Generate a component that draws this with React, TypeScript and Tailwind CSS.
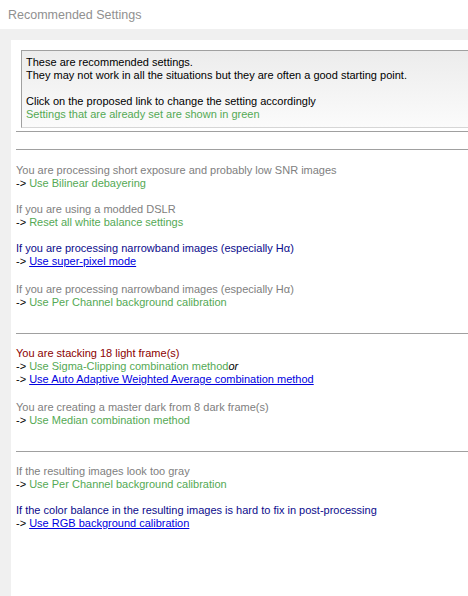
import React from "react";

type Part = { text: string; kind: "gray" | "green" | "navy" | "link" | "red" | "black" | "italic" };

const colorOf: Record<Part["kind"], string> = {
  gray: "text-[#808080]",
  green: "text-[#54a954]",
  navy: "text-[#0b0b8c]",
  link: "text-[#0000e0] underline",
  red: "text-[#8b0000]",
  black: "text-black",
  italic: "text-black italic",
};

function Line({ parts }: { parts: Part[] }) {
  return (
    <div className="h-[13px] leading-[13px] whitespace-nowrap">
      {parts.map((p, i) => (
        <span key={i} className={colorOf[p.kind]}>
          {p.text}
        </span>
      ))}
    </div>
  );
}

function Arrow({ text, kind, extra }: { text: string; kind: Part["kind"]; extra?: Part }) {
  const parts: Part[] = [{ text: "-> ", kind: "black" }, { text, kind }];
  if (extra) parts.push(extra);
  return <Line parts={parts} />;
}

function Rule() {
  return <div className="h-px bg-[#a0a0a0] -mr-2" />;
}

export default function App() {
  return (
    <div
      className="w-[468px] h-[596px] overflow-hidden bg-[#f0f0f0] flex flex-col text-[11px]"
      style={{ fontFamily: '"Liberation Sans", Arial, sans-serif' }}
    >
      <div className="h-[29px] bg-white flex items-center pl-2 pt-[1px] text-[12.5px] text-[#909090] shrink-0">
        Recommended Settings
      </div>

      <div className="flex-1 pl-[11px] pt-[11px] flex">
        <div className="flex-1 bg-white pl-[5px] pt-[10px] overflow-hidden">
          <div className="ml-[5px] -mr-8 h-[78px] border border-[#a0a0a0] border-b-[#d6d6d6] bg-gradient-to-b from-[#ececec] to-[#fbfbfb] pl-[4px] pt-[5px]">
            <Line parts={[{ text: "These are recommended settings.", kind: "black" }]} />
            <Line
              parts={[
                {
                  text: "They may not work in all the situations but they are often a good starting point.",
                  kind: "black",
                },
              ]}
            />
            <div className="h-[13px]" />
            <Line parts={[{ text: "Click on the proposed link to change the setting accordingly", kind: "black" }]} />
            <Line parts={[{ text: "Settings that are already set are shown in green", kind: "green" }]} />
          </div>

          <div className="mt-[3px]">
            <Rule />
          </div>
          <div className="mt-[17px]">
            <Rule />
          </div>

          <div className="mt-[14px] flex flex-col">
            <Line parts={[{ text: "You are processing short exposure and probably low SNR images", kind: "gray" }]} />
            <Arrow text="Use Bilinear debayering" kind="green" />
            <div className="h-[13px]" />
            <Line parts={[{ text: "If you are using a modded DSLR", kind: "gray" }]} />
            <Arrow text="Reset all white balance settings" kind="green" />
            <div className="h-[13px]" />
            <Line parts={[{ text: "If you are processing narrowband images (especially H\u03b1)", kind: "navy" }]} />
            <Arrow text="Use super-pixel mode" kind="link" />
            <div className="h-[15px]" />
            <Line parts={[{ text: "If you are processing narrowband images (especially H\u03b1)", kind: "gray" }]} />
            <Arrow text="Use Per Channel background calibration" kind="green" />
          </div>

          <div className="mt-[24px]">
            <Rule />
          </div>

          <div className="mt-[13px] flex flex-col">
            <Line parts={[{ text: "You are stacking 18 light frame(s)", kind: "red" }]} />
            <Arrow
              text="Use Sigma-Clipping combination method"
              kind="green"
              extra={{ text: "or", kind: "italic" }}
            />
            <Arrow text="Use Auto Adaptive Weighted Average combination method" kind="link" />
            <div className="h-[15px]" />
            <Line parts={[{ text: "You are creating a master dark from 8 dark frame(s)", kind: "gray" }]} />
            <Arrow text="Use Median combination method" kind="green" />
          </div>

          <div className="mt-[24px]">
            <Rule />
          </div>

          <div className="mt-[13px] flex flex-col">
            <Line parts={[{ text: "If the resulting images look too gray", kind: "gray" }]} />
            <Arrow text="Use Per Channel background calibration" kind="green" />
            <div className="h-[13px]" />
            <Line
              parts={[
                {
                  text: "If the color balance in the resulting images is hard to fix in post-processing",
                  kind: "navy",
                },
              ]}
            />
            <Arrow text="Use RGB background calibration" kind="link" />
          </div>
        </div>
      </div>
    </div>
  );
}
